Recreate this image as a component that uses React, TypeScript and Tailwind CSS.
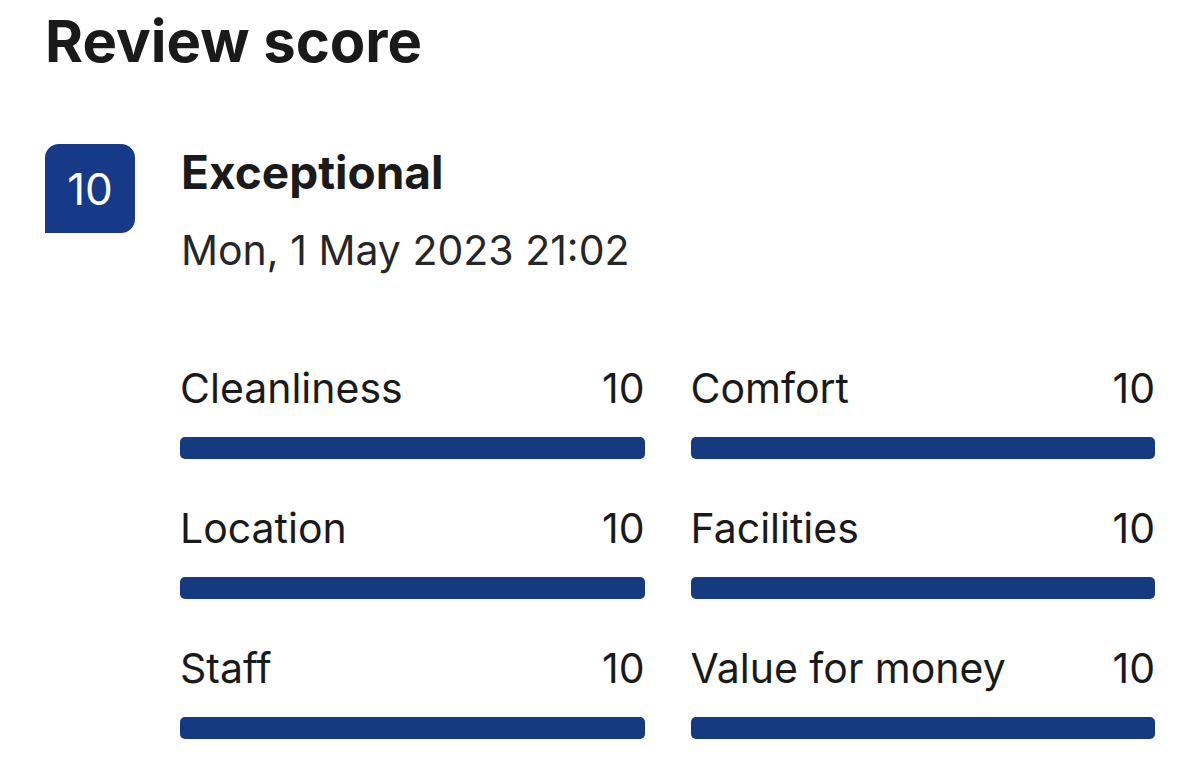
const scores = [
  { label: "Cleanliness", value: 10 },
  { label: "Comfort", value: 10 },
  { label: "Location", value: 10 },
  { label: "Facilities", value: 10 },
  { label: "Staff", value: 10 },
  { label: "Value for money", value: 10 },
];

const ScoreBar = ({ label, value }: { label: string; value: number }) => (
  <div>
    <div className="flex items-baseline justify-between text-[41px] leading-[48px] text-[#1a1a1a]">
      <span>{label}</span>
      <span>{value}</span>
    </div>
    <div className="mt-[25px] h-[22px] w-full rounded-[5px] bg-[#e7e7e7]">
      <div
        className="h-full rounded-[5px] bg-[#163a80]"
        style={{ width: `${value * 10}%` }}
      />
    </div>
  </div>
);

export default function App() {
  return (
    <div className="min-h-[784px] w-[1200px] bg-white pl-[45px] pt-[8px] font-['Inter',sans-serif] text-[#1a1a1a]">
      <h1 className="text-[58px] font-bold leading-[66px]">Review score</h1>
      <div className="mt-[70px] flex gap-[46px]">
        <div className="flex h-[89px] w-[90px] items-center justify-center rounded-tl-[14px] rounded-tr-[14px] rounded-br-[14px] bg-[#163a87] text-[44px] text-white">
          10
        </div>
        <div>
          <div className="text-[46px] font-bold leading-[56px]">Exceptional</div>
          <div className="mt-[26px] text-[41px] leading-[48px] text-[#262626]">Mon, 1 May 2023 21:02</div>
        </div>
      </div>
      <div className="ml-[135px] mt-[90px] grid w-[975px] grid-cols-2 gap-x-[46px] gap-y-[45px]">
        {scores.map((s) => (
          <ScoreBar key={s.label} label={s.label} value={s.value} />
        ))}
      </div>
    </div>
  );
}
